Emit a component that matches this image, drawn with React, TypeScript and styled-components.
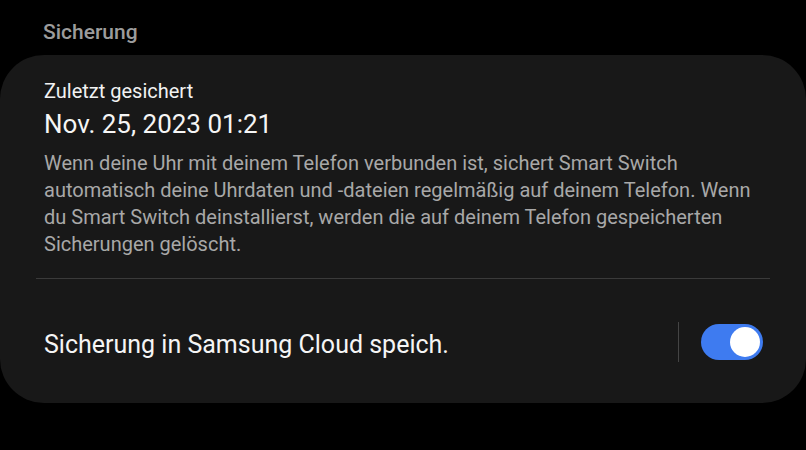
import styled, { createGlobalStyle } from "styled-components";

const GlobalStyle = createGlobalStyle`
  html, body {
    margin: 0;
    padding: 0;
    background: #000;
  }
  body {
    font-family: Roboto, "Noto Sans", sans-serif;
    -webkit-font-smoothing: antialiased;
  }
`;

const Screen = styled.div`
  width: 806px;
  height: 450px;
  background: #000;
  overflow: hidden;
`;

const SectionTitle = styled.h2`
  margin: 0;
  padding: 19px 0 0 43px;
  height: 36px;
  font-size: 21px;
  font-weight: 500;
  line-height: 26px;
  color: #9c9c9c;
`;

const Card = styled.section`
  background: #181818;
  border-radius: 44px;
  width: 806px;
  height: 348px;
  box-sizing: border-box;
  padding: 24px 36px 0 36px;
`;

const InfoBlock = styled.div`
  padding: 0 8px 20px 8px;
`;

const Label = styled.div`
  font-size: 20px;
  line-height: 24px;
  color: #f2f2f2;
`;

const DateText = styled.div`
  margin-top: 5px;
  font-size: 26px;
  line-height: 32px;
  color: #f5f5f5;
`;

const Description = styled.p`
  margin: 10px 0 0 0;
  width: 712px;
  font-size: 20px;
  line-height: 27px;
  color: #a8a8a8;
`;

const Divider = styled.hr`
  margin: 0;
  border: none;
  height: 1px;
  background: #3a3a3a;
`;

const ToggleRow = styled.div`
  display: flex;
  align-items: center;
  height: 125px;
  padding: 0 0 0 8px;
`;

const RowText = styled.div`
  flex: 1;
  font-size: 25px;
  color: #f5f5f5;
  margin-top: 6px;
`;

const VerticalRule = styled.div`
  width: 1px;
  height: 40px;
  background: #444;
  margin-right: 22px;
`;

const Switch = styled.div<{ $on: boolean }>`
  width: 62px;
  height: 36px;
  border-radius: 18px;
  background: ${(p) => (p.$on ? "#3e7bf0" : "#555")};
  display: flex;
  align-items: center;
  justify-content: ${(p) => (p.$on ? "flex-end" : "flex-start")};
  padding: 0 3px;
  box-sizing: border-box;
  margin-right: 7px;
`;

const Knob = styled.div`
  width: 30px;
  height: 30px;
  border-radius: 50%;
  background: #fff;
`;

export default function App() {
  return (
    <Screen>
      <GlobalStyle />
      <SectionTitle>Sicherung</SectionTitle>
      <Card>
        <InfoBlock>
          <Label>Zuletzt gesichert</Label>
          <DateText>Nov. 25, 2023 01:21</DateText>
          <Description>
            Wenn deine Uhr mit deinem Telefon verbunden ist, sichert Smart Switch
            automatisch deine Uhrdaten und -dateien regelmäßig auf deinem Telefon. Wenn
            du Smart Switch deinstallierst, werden die auf deinem Telefon gespeicherten
            Sicherungen gelöscht.
          </Description>
        </InfoBlock>
        <Divider />
        <ToggleRow>
          <RowText>Sicherung in Samsung Cloud speich.</RowText>
          <VerticalRule />
          <Switch $on={true}>
            <Knob />
          </Switch>
        </ToggleRow>
      </Card>
    </Screen>
  );
}
